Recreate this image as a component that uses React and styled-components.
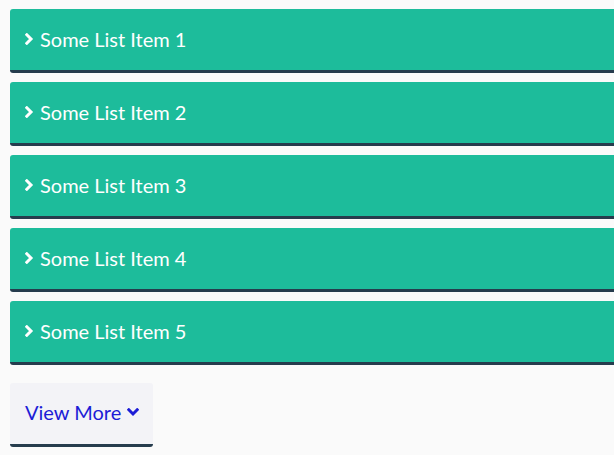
import React from 'react';
import styled, { createGlobalStyle } from 'styled-components';

const GlobalStyle = createGlobalStyle`
  html, body {
    margin: 0;
    background: #fafafa;
    font-family: Lato, "Liberation Sans", sans-serif;
    overflow: hidden;
  }
`;

const Wrapper = styled.div`
  padding: 9px 0 0 10px;
  width: 604px;
`;

const List = styled.ul`
  list-style: none;
  margin: 0;
  padding: 0;
  display: flex;
  flex-direction: column;
  gap: 9px;
`;

const Item = styled.li`
  height: 61px;
  box-sizing: border-box;
  padding: 0 0 2px 15px;
  background: #1dbc9b;
  border-bottom: 3px solid #263c4d;
  border-radius: 3px 0 0 3px;
  color: #ffffff;
  font-size: 20px;
  display: flex;
  align-items: center;
  gap: 6px;
  height: 64px;
`;

const MoreButton = styled.button`
  margin-top: 18px;
  height: 64px;
  width: 143px;
  border: none;
  border-bottom: 3px solid #263c4d;
  border-radius: 3px;
  background: #f3f3f7;
  color: #1c1cd6;
  font-family: inherit;
  font-size: 20px;
  display: flex;
  align-items: center;
  padding: 0 0 3px 15px;
  gap: 6px;
  cursor: pointer;
`;

const Chevron = ({ down }) => (
  <svg width={down ? 12 : 9} height={down ? 9 : 12} viewBox={down ? '0 0 12 9' : '0 0 9 12'}>
    <polyline
      points={down ? '1.8,1.8 6,6 10.2,1.8' : '1.8,1.8 6,6 1.8,10.2'}
      fill="none"
      stroke="currentColor"
      strokeWidth="3"
      strokeLinecap="square"
    />
  </svg>
);

const items = [1, 2, 3, 4, 5];

export default function App() {
  return (
    <Wrapper>
      <GlobalStyle />
      <List>
        {items.map((n) => (
          <Item key={n}>
            <Chevron />
            Some List Item {n}
          </Item>
        ))}
      </List>
      <MoreButton>
        View More
        <Chevron down />
      </MoreButton>
    </Wrapper>
  );
}
